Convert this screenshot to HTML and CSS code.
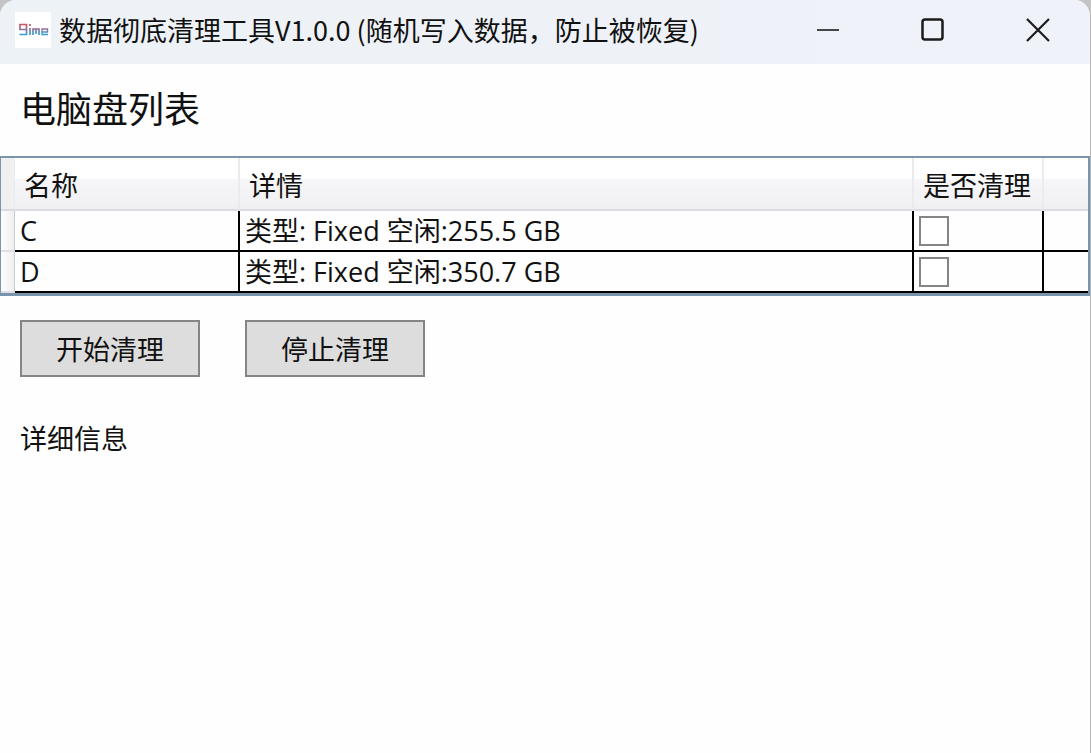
FILE: index.html
```
<!DOCTYPE html>
<html lang="zh-CN">
<head>
<meta charset="utf-8">
<title>数据彻底清理工具V1.0.0</title>
<link rel="stylesheet" href="styles.css">
</head>
<body>
<div class="window">
  <header class="titlebar">
    <svg class="logo" viewBox="0 0 36 36" aria-hidden="true">
      <defs>
        <linearGradient id="ink" gradientUnits="userSpaceOnUse" x1="0" y1="11" x2="0" y2="25">
          <stop offset="0.2" stop-color="#d0546c"/>
          <stop offset="0.5" stop-color="#8078a8"/>
          <stop offset="0.75" stop-color="#3d9ad0"/>
        </linearGradient>
      </defs>
      <rect width="36" height="36" fill="#fff"/>
      <g fill="none" stroke="url(#ink)" stroke-width="1.7">
        <path d="M11 17.5H5V12.5H11.5V22.5H4.500"/>
        <path d="M15 12V14M15 16V23"/>
        <path d="M18 23V17H24V23M21 17V22"/>
        <path d="M26.500 20H32.500V17H27V22.500H33" stroke-width="1.4"/>
      </g>
    </svg>
    <h1 class="title">数据彻底清理工具V1.0.0 (随机写入数据，防止被恢复)</h1>
    <div class="controls">
      <button class="control" type="button" aria-label="最小化">
        <svg viewBox="0 0 24 24"><path d="M1 12H23" stroke-width="1.6"/></svg>
      </button>
      <button class="control" type="button" aria-label="最大化">
        <svg viewBox="0 0 24 24"><rect x="1.500" y="1.500" width="20" height="20" rx="2.500" stroke-width="2.500"/></svg>
      </button>
      <button class="control" type="button" aria-label="关闭">
        <svg viewBox="0 0 24 24"><path d="M1 1L23 23M23 1L1 23" stroke-width="2.200"/></svg>
      </button>
    </div>
  </header>
  <main>
    <h2 class="heading">电脑盘列表</h2>
    <div class="grid">
      <table class="drives">
        <colgroup>
          <col class="col-handle"><col class="col-name"><col><col class="col-clean"><col class="col-rest">
        </colgroup>
        <thead>
          <tr><td class="corner"></td><th scope="col">名称</th><th scope="col">详情</th><th scope="col">是否清理</th><td class="filler"></td></tr>
        </thead>
        <tbody>
          <tr><td class="handle"></td><td>C</td><td>类型: Fixed 空闲:255.5 GB</td><td><input class="tick" type="checkbox" aria-label="是否清理 C"></td><td class="last"></td></tr>
          <tr><td class="handle"></td><td>D</td><td>类型: Fixed 空闲:350.7 GB</td><td><input class="tick" type="checkbox" aria-label="是否清理 D"></td><td class="last"></td></tr>
        </tbody>
      </table>
    </div>
    <div class="actions">
      <button class="action" type="button">开始清理</button>
      <button class="action" type="button">停止清理</button>
    </div>
    <p class="details">详细信息</p>
  </main>
</div>
</body>
</html>
```
FILE: styles.css
```
* { box-sizing: border-box; }

body {
  margin: 0;
  background: #c4c4c4;
  color: #111;
  font: 27px/36px "Open Sans", "Noto Sans CJK SC", sans-serif;
}

.window {
  min-height: 100vh;
  overflow: hidden;
  background: #fefefe;
  border-right: 1px solid #b4b4b4;
  border-radius: 16px 16px 0 0;
}

.titlebar {
  display: flex;
  align-items: center;
  height: 64px;
  padding: 0 0 4px 15px;
  background: linear-gradient(90deg, #edf2f6, #eff2f9);
}

.logo {
  flex: none;
  width: 36px;
  height: 36px;
}

.title {
  flex: 1;
  margin: 0 0 0 8px;
  font-size: 27px;
  font-weight: 400;
  font-family: "Noto Sans CJK SC", sans-serif;
  white-space: nowrap;
}

.controls { display: flex; }

.control {
  display: grid;
  place-items: center;
  width: 105px;
  height: 60px;
  padding: 0;
  border: 0;
  background: none;
}

.control svg {
  width: 24px;
  height: 24px;
  fill: none;
  stroke: #1b1b1b;
}

.heading {
  margin: 0;
  padding: 22px 20px;
  font-size: 36px;
  line-height: 48px;
  font-weight: 400;
}

.grid {
  border: 2px solid #7b94ae;
  border-left-width: 1px;
  border-bottom-width: 3px;
}

.drives {
  width: 100%;
  table-layout: fixed;
  border-collapse: separate;
  border-spacing: 0;
}

.col-handle { width: 14px; }
.col-name { width: 225px; }
.col-clean { width: 130px; }
.col-rest { width: 44px; }

.drives th,
.drives td {
  padding: 0 5px;
  text-align: left;
  font-weight: 400;
  white-space: nowrap;
}

.drives thead > tr > * {
  height: 53px;
  border-right: 2px solid #ebebee;
  border-bottom: 2px solid #dcdce0;
  background: linear-gradient(#fff 0 40%, #f6f6f8 42%, #f0f0f3);
}

.drives th { padding: 4px 0 0 9px; }

.drives thead > tr > .corner {
  padding: 0;
  border-right-width: 1px;
  background: #f0f0f0;
}

.drives thead > tr > .filler { border-right: 0; }

.drives tbody td {
  height: 41px;
  border-right: 2px solid #000;
  border-bottom: 2px solid #000;
}

.drives tbody .last { border-right: 0; }

.drives tbody .handle {
  padding: 0;
  border-right: 1px solid #ccc;
  border-bottom: 2px solid #e0e0e4;
  background: linear-gradient(90deg, #fff, #eeeef2);
}

.tick {
  display: block;
  width: 30px;
  height: 30px;
  margin: 0;
  border: 2px solid #858585;
  background: #fff;
  appearance: none;
}

.tick:checked { background: #333; box-shadow: inset 0 0 0 4px #fff; }

.actions {
  display: flex;
  gap: 45px;
  padding: 24px 20px 0;
}

.action {
  width: 180px;
  height: 57px;
  padding: 2px 0 0;
  border: 2px solid #858585;
  background: #ddd;
  color: inherit;
  font: inherit;
}

.details {
  margin: 0;
  padding: 44px 20px 0;
}
```
